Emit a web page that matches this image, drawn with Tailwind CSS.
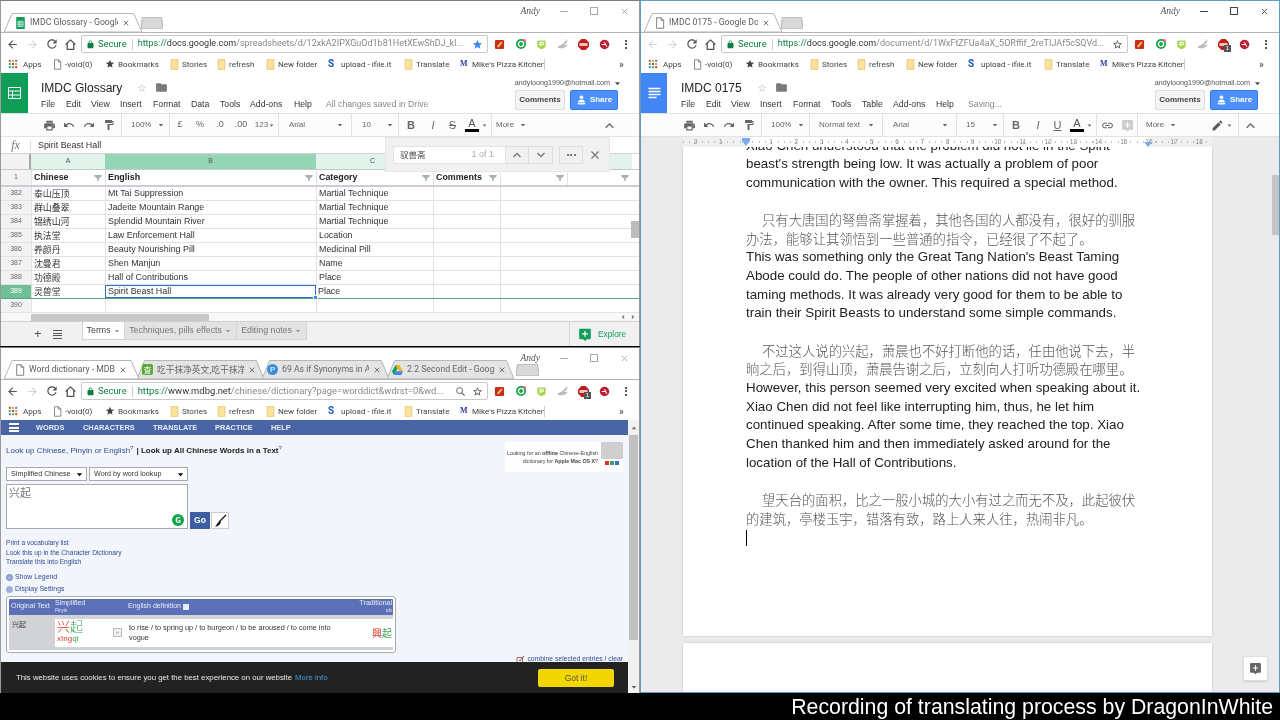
<!DOCTYPE html>
<html lang="en"><head><meta charset="utf-8"><title>Recording of translating process</title>
<script src="https://cdn.jsdelivr.net/npm/@tailwindcss/browser@4"></script></head>
<body class="m-0 bg-black overflow-hidden">
<svg class="hidden" width="0" height="0"><defs>
<symbol id="back" viewBox="0 0 24 24"><path fill="currentColor" d="M20 11H7.83l5.59-5.59L12 4l-8 8 8 8 1.41-1.41L7.83 13H20v-2z"/></symbol>
<symbol id="fwd" viewBox="0 0 24 24"><path fill="currentColor" d="M12 4l-1.41 1.41L16.17 11H4v2h12.17l-5.58 5.59L12 20l8-8z"/></symbol>
<symbol id="reload" viewBox="0 0 24 24"><path fill="currentColor" d="M17.65 6.35C16.2 4.9 14.21 4 12 4c-4.42 0-7.99 3.58-7.99 8s3.57 8 7.99 8c3.73 0 6.84-2.55 7.73-6h-2.08c-.82 2.33-3.04 4-5.65 4-3.31 0-6-2.69-6-6s2.69-6 6-6c1.66 0 3.14.69 4.22 1.78L13 11h7V4l-2.35 2.35z"/></symbol>
<symbol id="home" viewBox="0 0 24 24"><path fill="none" stroke="currentColor" stroke-width="2.4" stroke-linejoin="round" d="M3 12 L12 3.5 L21 12 M6 10 V21 H18 V10"/></symbol>
<symbol id="lock" viewBox="0 0 24 24"><path fill="currentColor" d="M18 8h-1V6c0-2.76-2.24-5-5-5S7 3.24 7 6v2H6c-1.1 0-2 .9-2 2v10c0 1.1.9 2 2 2h12c1.1 0 2-.9 2-2V10c0-1.1-.9-2-2-2zM9 6c0-1.66 1.34-3 3-3s3 1.34 3 3v2H9V6z"/></symbol>
<symbol id="star" viewBox="0 0 24 24"><path fill="currentColor" d="M12 17.27L18.18 21l-1.64-7.03L22 9.24l-7.19-.61L12 2 9.19 8.63 2 9.24l5.46 4.73L5.82 21z"/></symbol>
<symbol id="staro" viewBox="0 0 24 24"><path fill="currentColor" d="M22 9.24l-7.19-.62L12 2 9.19 8.63 2 9.24l5.46 4.73L5.82 21 12 17.27 18.18 21l-1.63-7.03L22 9.24zM12 15.4l-3.76 2.27 1-4.28-3.32-2.88 4.38-.38L12 6.1l1.71 4.04 4.38.38-3.32 2.88 1 4.28L12 15.4z"/></symbol>
<symbol id="folder" viewBox="0 0 24 24"><path fill="currentColor" d="M10 4H4c-1.1 0-2 .9-2 2v12c0 1.1.9 2 2 2h16c1.1 0 2-.9 2-2V8c0-1.1-.9-2-2-2h-8l-2-2z"/></symbol>
<symbol id="bmfolder" viewBox="0 0 12 14"><path fill="#fbe39c" stroke="#e3c265" stroke-width="1" d="M1.5.5h9v13h-9z"/></symbol>
<symbol id="page" viewBox="0 0 12 14"><path fill="#fff" stroke="#666" stroke-width="1" d="M2 .7h5.4L10.4 3.7V13.3H2z M7.4 .7V3.7H10.4"/></symbol>
<symbol id="apps" viewBox="0 0 12 12"><g><rect x="1" y="1" width="2.4" height="2.4" fill="#d9453a"/><rect x="4.8" y="1" width="2.4" height="2.4" fill="#e9a23b"/><rect x="8.6" y="1" width="2.4" height="2.4" fill="#4285f4"/><rect x="1" y="4.8" width="2.4" height="2.4" fill="#4caf50"/><rect x="4.8" y="4.8" width="2.4" height="2.4" fill="#d9453a"/><rect x="8.6" y="4.8" width="2.4" height="2.4" fill="#e9a23b"/><rect x="1" y="8.6" width="2.4" height="2.4" fill="#4285f4"/><rect x="4.8" y="8.6" width="2.4" height="2.4" fill="#4caf50"/><rect x="8.6" y="8.6" width="2.4" height="2.4" fill="#d9453a"/></g></symbol>
<symbol id="print" viewBox="0 0 24 24"><path fill="currentColor" d="M19 8H5c-1.66 0-3 1.34-3 3v6h4v4h12v-4h4v-6c0-1.66-1.34-3-3-3zm-3 11H8v-5h8v5zm3-7c-.55 0-1-.45-1-1s.45-1 1-1 1 .45 1 1-.45 1-1 1zm-1-9H6v4h12V3z"/></symbol>
<symbol id="undo" viewBox="0 0 24 24"><path fill="currentColor" d="M12.5 8c-2.65 0-5.05.99-6.9 2.6L2 7v9h9l-3.62-3.62c1.39-1.16 3.16-1.88 5.12-1.88 3.54 0 6.55 2.31 7.6 5.5l2.37-.78C21.08 11.03 17.15 8 12.5 8z"/></symbol>
<symbol id="redo" viewBox="0 0 24 24"><path fill="currentColor" d="M18.4 10.6C16.55 8.99 14.15 8 11.5 8c-4.65 0-8.58 3.03-9.96 7.22L3.9 16c1.05-3.19 4.05-5.5 7.6-5.5 1.95 0 3.73.72 5.12 1.88L13 16h9V7l-3.6 3.6z"/></symbol>
<symbol id="paint" viewBox="0 0 24 24"><path fill="currentColor" d="M18 4V3c0-.55-.45-1-1-1H5c-.55 0-1 .45-1 1v4c0 .55.45 1 1 1h12c.55 0 1-.45 1-1V6h1v4H9v11c0 .55.45 1 1 1h2c.55 0 1-.45 1-1v-9h8V4h-3z"/></symbol>
<symbol id="link" viewBox="0 0 24 24"><path fill="currentColor" d="M3.9 12c0-1.71 1.39-3.1 3.1-3.1h4V7H7c-2.76 0-5 2.24-5 5s2.24 5 5 5h4v-1.9H7c-1.71 0-3.1-1.39-3.1-3.1zM8 13h8v-2H8v2zm9-6h-4v1.9h4c1.71 0 3.1 1.39 3.1 3.1s-1.39 3.1-3.1 3.1h-4V17h4c2.76 0 5-2.24 5-5s-2.24-5-5-5z"/></symbol>
<symbol id="pencil" viewBox="0 0 24 24"><path fill="currentColor" d="M3 17.25V21h3.75L17.81 9.94l-3.75-3.75L3 17.25zM20.71 7.04c.39-.39.39-1.02 0-1.41l-2.34-2.34c-.39-.39-1.02-.39-1.41 0l-1.83 1.83 3.75 3.75 1.83-1.83z"/></symbol>
<symbol id="up" viewBox="0 0 24 24"><path fill="none" stroke="currentColor" stroke-width="2.6" d="M5 16l7-7 7 7"/></symbol>
<symbol id="down" viewBox="0 0 24 24"><path fill="none" stroke="currentColor" stroke-width="2.6" d="M5 8l7 7 7-7"/></symbol>
<symbol id="close" viewBox="0 0 24 24"><path fill="none" stroke="currentColor" stroke-width="2.4" d="M5 5l14 14M19 5L5 19"/></symbol>
<symbol id="person" viewBox="0 0 24 24"><g fill="currentColor"><circle cx="12" cy="6" r="4"/><path d="M5 16c0-3 3-5 7-5s7 2 7 5v1H5z"/><path d="M3 18h18l-2 4H5z" opacity=".9"/></g></symbol>
<symbol id="filter" viewBox="0 0 10 8"><path fill="#a9b3ae" d="M0 0h10v1.6L6 5v3H4V5L0 1.6z"/></symbol>
<symbol id="cmt" viewBox="0 0 24 24"><path fill="currentColor" d="M4 2h16c1.1 0 2 .9 2 2v14c0 1.1-.9 2-2 2h-5l-3 3-3-3H4c-1.1 0-2-.9-2-2V4c0-1.1.9-2 2-2z"/><path fill="#fff" d="M11 6h2v4h4v2h-4v4h-2v-4H7v-2h4z"/></symbol>
<symbol id="ext1" viewBox="0 0 12 12"><rect x="1" y="1" width="10" height="10" rx="1.5" fill="#c62e24"/><path d="M4 8.5L8.5 3.5" stroke="#f7c948" stroke-width="2"/></symbol>
<symbol id="ext2" viewBox="0 0 12 12"><circle cx="6" cy="6" r="5" fill="#15a34a"/><circle cx="6" cy="6" r="2.6" fill="none" stroke="#fff" stroke-width="1.3"/><circle cx="9.4" cy="2.6" r="1.7" fill="#e36a6a"/></symbol>
<symbol id="ext3" viewBox="0 0 12 12"><path d="M1.5 1.5h9v6c0 1.7-2.5 3-4.5 3.5-2-.5-4.5-1.8-4.5-3.5z" fill="#a5d64c"/><path d="M4.5 8V3.5h2.2a1.4 1.4 0 0 1 0 2.8H4.5" fill="none" stroke="#fff" stroke-width="1.2"/></symbol>
<symbol id="ext4" viewBox="0 0 12 12"><path d="M1 8C4 8 8 4 10 1c1 3-1 5-3 6 2 0 3 0 4-.5C9 10 5 11 1 10z" fill="#bdbdbd"/></symbol>
<symbol id="ext5" viewBox="0 0 12 12"><path d="M3.7 0h4.6L12 3.7v4.6L8.3 12H3.7L0 8.3V3.7z" fill="#c41b1b"/><rect x="1.6" y="4.4" width="8.8" height="3.2" fill="#fff" opacity=".75"/></symbol>
<symbol id="ext6" viewBox="0 0 12 12"><circle cx="6" cy="6" r="5.2" fill="#bb1f32"/><path d="M3 6h4M6 3.5L8.5 8.5" stroke="#fff" stroke-width="1.1" fill="none"/></symbol>
<symbol id="tab" viewBox="0 0 100 20" preserveAspectRatio="none"><path d="M0 20 L6 .5 H94 L100 20 Z" fill="currentColor" stroke="#b4b4b4" stroke-width="1" vector-effect="non-scaling-stroke"/></symbol>
<symbol id="sheet" viewBox="0 0 12 14"><rect x="1" y="0" width="10" height="14" rx="1" fill="#0f9d58"/><path d="M3 5h6v6H3zM3 7h6M3 9h6M5.5 5v6" fill="none" stroke="#fff" stroke-width=".8"/></symbol>
<symbol id="caret" viewBox="0 0 8 8"><path d="M1 2.5h6L4 6z" fill="currentColor"/></symbol>
<pattern id="callig" width="190" height="125" patternUnits="userSpaceOnUse"><g fill="none" stroke="#e4e7f4" stroke-width="5" stroke-linecap="round"><path d="M30 14c20 6 30 0 36-8M48 8c-6 22-14 38-26 50M40 36c16 2 24 10 24 24-1 14-12 22-26 26M100 20c14 18 14 40 2 64M130 16c-4 26-14 50-32 72M120 40c14 10 26 24 32 44"/><path d="M22 100c14-6 28-6 42 0M150 104c8-8 20-12 30-10" stroke-width="4"/></g></pattern>
</defs></svg>
<div class="w-[1280px] h-[720px] flex flex-col bg-black font-['Liberation_Sans',sans-serif] text-[#333] blur-[0.3px]">
<div class="flex h-[693px]">

<!-- LEFT COLUMN -->
<div class="w-[640px] h-[693px] flex flex-col gap-px">

<!-- SHEETS WINDOW -->
<div class="h-[346px] bg-white flex flex-col border-t border-[#7d7d7d] border-x border-x-[#9a9a9a] overflow-hidden">
  <div class="h-[31px] shrink-0 relative flex items-end pl-[3px]">
    <div class="relative w-[138px] h-[19px] flex items-center pl-[11px] gap-[4px] text-white z-10">
      <svg class="absolute inset-0 w-full h-full"><use href="#tab"/></svg>
      <svg class="relative w-[11px] h-[12px]"><use href="#sheet"/></svg>
      <span class="relative w-[88px] overflow-hidden whitespace-nowrap text-[8.7px] text-[#5c5c5c] font-['Roboto',sans-serif]">IMDC Glossary - Google</span>
      <svg class="relative w-[8px] h-[8px] text-[#555]"><use href="#close"/></svg>
    </div>
    <div class="relative w-[22px] h-[12px] mb-[3px] -ml-[1px] text-[#d8d8d8]"><svg class="absolute inset-0 w-full h-full"><use href="#tab"/></svg></div>
    <div class="absolute right-0 top-[3px] flex items-center text-[#a9a9a9]">
      <span class="text-[9.500px] italic text-[#555] font-['Liberation_Serif',serif] mr-[9px]">Andy</span>
      <span class="w-[30px] flex justify-center"><span class="w-[8px] h-px bg-[#a9a9a9]"></span></span>
      <span class="w-[30px] flex justify-center"><span class="w-[8px] h-[8px] border border-[#a9a9a9]"></span></span>
      <span class="w-[30px] flex justify-center"><svg class="w-[9px] h-[9px]"><use href="#close"/></svg></span>
    </div>
  </div>
  <div class="h-[23px] shrink-0 flex items-center pl-[1px] border-t border-[#b4b4b4] bg-white">
    <span class="w-[20px] flex justify-center text-[#555]"><svg class="w-[13px] h-[13px]"><use href="#back"/></svg></span>
    <span class="w-[20px] flex justify-center text-[#d5d5d5]"><svg class="w-[13px] h-[13px]"><use href="#fwd"/></svg></span>
    <span class="w-[19px] flex justify-center text-[#555]"><svg class="w-[14px] h-[14px]"><use href="#reload"/></svg></span>
    <span class="w-[19px] flex justify-center text-[#555]"><svg class="w-[13px] h-[13px]"><use href="#home"/></svg></span>
    <div class="ml-[1px] w-[407px] h-[18px] border border-[#c9c9c9] rounded-[2px] flex items-center pl-[4px] text-[9.4px] whitespace-nowrap font-['Roboto',sans-serif]">
      <svg class="w-[9px] h-[9px] text-[#0b8043]"><use href="#lock"/></svg><span class="ml-[3px] text-[#0b8043]">Secure</span><span class="w-px h-[11px] bg-[#ccc] mx-[5px]"></span><span class="w-[332px] overflow-hidden text-[9px]"><span class="text-[#0b8043]">https://</span><span class="text-[#333]">docs.google.com</span><span class="text-[#888]">/spreadsheets/d/12xkA2IPXGuOd1b81HetXEwShDJ_kl...</span></span>
      <svg class="ml-auto mr-[4px] w-[11px] h-[11px] text-[#4285f4]"><use href="#star"/></svg>
    </div>
    <span class="w-[21px] ml-[1px] flex justify-center"><svg class="w-[11px] h-[11px]"><use href="#ext1"/></svg></span>
    <span class="w-[21px] flex justify-center"><svg class="w-[12px] h-[12px]"><use href="#ext2"/></svg></span>
    <span class="w-[21px] flex justify-center"><svg class="w-[11px] h-[11px]"><use href="#ext3"/></svg></span>
    <span class="w-[21px] flex justify-center"><svg class="w-[12px] h-[12px]"><use href="#ext4"/></svg></span>
    <span class="w-[21px] flex justify-center"><svg class="w-[11px] h-[11px]"><use href="#ext5"/></svg></span>
    <span class="w-[21px] flex justify-center"><svg class="w-[11px] h-[11px]"><use href="#ext6"/></svg></span>
    <span class="w-[21px] flex flex-col items-center gap-[1.5px]"><i class="w-[2px] h-[2px] bg-[#555]"></i><i class="w-[2px] h-[2px] bg-[#555]"></i><i class="w-[2px] h-[2px] bg-[#555]"></i></span>
  </div>
  <div class="h-[18px] shrink-0 flex items-center pl-[7px] text-[8.1px] text-[#444] whitespace-nowrap font-['Roboto',sans-serif]">
    <svg class="w-[10px] h-[10px]"><use href="#apps"/></svg><span class="ml-[5px] w-[27px]">Apps</span>
    <svg class="ml-[3px] w-[9px] h-[11px]"><use href="#page"/></svg><span class="ml-[3px] w-[36px]">-void(0)</span>
    <svg class="ml-[4px] w-[10px] h-[10px] text-[#444]"><use href="#star"/></svg><span class="ml-[3px] w-[52px]">Bookmarks</span>
    <svg class="w-[9px] h-[11px]"><use href="#bmfolder"/></svg><span class="ml-[3px] w-[35px]">Stories</span>
    <svg class="w-[9px] h-[11px]"><use href="#bmfolder"/></svg><span class="ml-[3px] w-[37px]">refresh</span>
    <svg class="w-[9px] h-[11px]"><use href="#bmfolder"/></svg><span class="ml-[3px] w-[50px]">New folder</span>
    <span class="w-[10px] text-[#1a56c4] font-bold text-[10px] leading-none">S</span><span class="ml-[3px] w-[63px]">upload - ifile.it</span>
    <svg class="w-[9px] h-[11px]"><use href="#bmfolder"/></svg><span class="ml-[3px] w-[44px]">Translate</span>
    <span class="w-[11px] text-[#1f3aa0] font-bold text-[8px] font-['Liberation_Serif',serif]">M</span><span class="ml-[1px] w-[72px]">Mike's Pizza Kitchen</span>
    <span class="w-px h-[11px] bg-[#ccc]"></span>
    <span class="ml-[74px] text-[10px]">»</span>
  </div>
  <!-- app bar -->
  <div class="h-[40px] shrink-0 flex relative">
    <div class="w-[27px] bg-[#0f9d58] flex items-center justify-center"><svg class="w-[13px] h-[12px]" viewBox="0 0 13 12"><path d="M.5.5h12v11H.5zM.5 4h12M.5 8h12M4.500 4v7.500" fill="none" stroke="#fff" stroke-width="1"/></svg></div>
    <div class="pl-[13px] pt-[6px] flex-1">
      <div class="flex items-center h-[17px]"><span class="text-[12px] text-[#222]">IMDC Glossary</span><svg class="ml-[15px] w-[10px] h-[10px] text-[#d4d4d4]"><use href="#staro"/></svg><svg class="ml-[8px] w-[13px] h-[13px] text-[#7a7a7a]"><use href="#folder"/></svg></div>
      <div class="flex mt-[3px] text-[8.7px] text-[#333] whitespace-nowrap h-[12px] items-center">
        <span class="w-[25px]">File</span><span class="w-[25px]">Edit</span><span class="w-[29px]">View</span><span class="w-[33px]">Insert</span><span class="w-[38px]">Format</span><span class="w-[29px]">Data</span><span class="w-[30px]">Tools</span><span class="w-[44px]">Add-ons</span><span class="w-[32px]">Help</span><span class="text-[#888]">All changes saved in Drive</span>
      </div>
    </div>
    <div class="absolute right-[18px] top-[5px] flex items-center text-[7.2px] text-[#555] gap-[4px]">andyloong1990@hotmail.com<svg class="w-[7px] h-[7px]"><use href="#caret"/></svg></div>
    <div class="absolute left-[514px] top-[17px] flex gap-[5px]">
      <div class="w-[50px] h-[20px] bg-[#f5f5f5] border border-[#dcdcdc] rounded-[2px] flex items-center justify-center text-[8px] font-bold text-[#444]">Comments</div>
      <div class="w-[48px] h-[20px] bg-[#4d90fe] border border-[#3079ed] rounded-[2px] flex items-center justify-center gap-[3px] text-[8px] font-bold text-white"><svg class="w-[11px] h-[12px]"><use href="#person"/></svg>Share</div>
    </div>
  </div>
  <!-- toolbar -->
  <div class="h-[24px] shrink-0 flex items-center pl-[38px] border-y border-[#e3e3e3] bg-[#fcfcfc] text-[#666] text-[8px] whitespace-nowrap relative">
    <span class="w-[20px] flex justify-center"><svg class="w-[13px] h-[13px]"><use href="#print"/></svg></span>
    <span class="w-[20px] flex justify-center"><svg class="w-[12px] h-[12px]"><use href="#undo"/></svg></span>
    <span class="w-[20px] flex justify-center"><svg class="w-[12px] h-[12px]"><use href="#redo"/></svg></span>
    <span class="w-[20px] flex justify-center"><svg class="w-[12px] h-[12px]"><use href="#paint"/></svg></span>
    <span class="ml-[2px] w-px h-[23px] bg-[#e3e3e3]"></span>
    <span class="w-[47px] pl-[9px] flex items-center gap-[7px]">100%<svg class="w-[6px] h-[6px]"><use href="#caret"/></svg></span>
    <span class="w-px h-[23px] bg-[#e3e3e3]"></span>
    <span class="w-[20px] flex justify-center text-[9px]">£</span>
    <span class="w-[20px] flex justify-center text-[9px]">%</span>
    <span class="w-[20px] flex justify-center text-[9px]">.0</span>
    <span class="w-[22px] flex justify-center text-[9px]">.00</span>
    <span class="w-[25px] flex justify-center items-center gap-[1px]">123<svg class="w-[5px] h-[5px]"><use href="#caret"/></svg></span>
    <span class="ml-px w-px h-[23px] bg-[#e3e3e3]"></span>
    <span class="w-[72px] pl-[10px] flex items-center">Arial<svg class="ml-auto mr-[8px] w-[6px] h-[6px]"><use href="#caret"/></svg></span>
    <span class="w-px h-[23px] bg-[#e3e3e3]"></span>
    <span class="w-[46px] pl-[10px] flex items-center">10<svg class="ml-auto mr-[5px] w-[6px] h-[6px]"><use href="#caret"/></svg></span>
    <span class="w-px h-[23px] bg-[#e3e3e3]"></span>
    <span class="w-[24px] flex justify-center font-bold text-[11px]">B</span>
    <span class="w-[20px] flex justify-center italic text-[11px]">I</span>
    <span class="w-[19px] flex justify-center line-through text-[11px]">S</span>
    <span class="w-[20px] flex flex-col items-center text-[11px] leading-[11px] text-[#555]">A<i class="block w-[14px] h-[3px] bg-black"></i></span>
    <svg class="w-[5px] h-[5px]"><use href="#caret"/></svg>
    <span class="ml-[4px] w-px h-[23px] bg-[#e3e3e3]"></span>
    <span class="ml-[4px] flex items-center gap-[6px]">More<svg class="w-[6px] h-[6px]"><use href="#caret"/></svg></span>
    <svg class="absolute left-[602px] top-[5px] w-[13px] h-[13px]"><use href="#up"/></svg>
  </div>
  <!-- formula bar -->
  <div class="h-[17px] shrink-0 flex items-center border-b border-[#d4d4d4] text-[8.9px] relative z-10">
    <span class="w-[29px] text-center italic text-[12px] text-[#777] font-['Liberation_Serif',serif]">fx</span>
    <span class="w-px h-[11px] bg-[#ddd]"></span>
    <span class="ml-[7px] pt-[1px] text-[#333]">Spirit Beast Hall</span>
    <!-- find panel -->
    <div class="absolute left-[384px] top-0 w-[225px] h-[35px] bg-[#f1f1f1] border border-[#e6e6e6] flex items-center pl-[7px] z-20">
      <div class="w-[113px] h-[18px] bg-white border border-[#e4e4e4] flex items-center pl-[6px] pr-[11px] text-[8.5px] text-[#444] font-['Noto_Sans_CJK_SC',sans-serif]"><span>驭兽斋</span><span class="ml-auto text-[9px] text-[#aaa] font-['Liberation_Sans',sans-serif]">1 of 1</span></div>
      <div class="w-[47px] h-[18px] border border-[#dedede] border-l-0 flex text-[#777]"><span class="w-[23px] flex items-center justify-center border-r border-[#dedede]"><svg class="w-[12px] h-[12px]"><use href="#up"/></svg></span><span class="flex-1 flex items-center justify-center"><svg class="w-[12px] h-[12px]"><use href="#down"/></svg></span></div>
      <div class="ml-[6px] w-[24px] h-[18px] border border-[#dedede] flex items-center justify-center gap-[1.5px]"><i class="w-[2px] h-[2px] bg-[#777]"></i><i class="w-[2px] h-[2px] bg-[#777]"></i><i class="w-[2px] h-[2px] bg-[#777]"></i></div>
      <svg class="ml-[6px] w-[12px] h-[12px] text-[#777]"><use href="#close"/></svg>
    </div>
  </div>
  <!-- grid -->
  <div class="flex-1 flex flex-col relative">
    <div class="h-[16px] flex border-b border-[#c8c8c8] text-[7px] text-[#555]">
      <div class="w-[28px] bg-[#f3f3f3]"></div><div class="w-[2px] bg-[#a8a8a8]"></div>
      <div class="w-[74px] bg-[#e1f3ea] flex items-center justify-center">A</div>
      <div class="w-[211px] bg-[#93d5b5] flex items-center justify-center">B</div>
      <div class="w-[316px] bg-[#e1f3ea] flex items-center pl-[54px]">C</div>
    </div>
    <div class="h-[17px] flex border-b-2 border-[#c9ced4] text-[8.9px] font-bold text-[#222] items-stretch whitespace-nowrap">
      <div class="w-[30px] bg-[#f3f3f3] flex items-center justify-center text-[7px] font-normal text-[#666]">1</div>
      <div class="w-[74px] flex items-center pl-[2px] border-l border-[#e2e2e2] pr-[3px] justify-between"><span>Chinese</span><svg class="w-[8px] h-[6px]"><use href="#filter"/></svg></div>
      <div class="w-[211px] flex items-center pl-[2px] border-l border-[#e2e2e2] pr-[3px] justify-between"><span>English</span><svg class="w-[8px] h-[6px]"><use href="#filter"/></svg></div>
      <div class="w-[117px] flex items-center pl-[2px] border-l border-[#e2e2e2] pr-[3px] justify-between"><span>Category</span><svg class="w-[8px] h-[6px]"><use href="#filter"/></svg></div>
      <div class="w-[67px] flex items-center pl-[2px] border-l border-[#e2e2e2] pr-[3px] justify-between"><span>Comments</span><svg class="w-[8px] h-[6px]"><use href="#filter"/></svg></div>
      <div class="w-[67px] flex items-center justify-end border-l border-[#e2e2e2] pr-[3px]"><svg class="w-[8px] h-[6px]"><use href="#filter"/></svg></div>
      <div class="w-[65px] flex items-center justify-end border-l border-[#e2e2e2] pr-[3px]"><svg class="w-[8px] h-[6px]"><use href="#filter"/></svg></div>
    </div>
    <div class="relative flex-none text-[8.9px] text-[#333] whitespace-nowrap">
      <div class="h-[14px] flex border-b border-[#e2e2e2]"><div class="w-[30px] bg-[#f3f3f3] flex items-center justify-center text-[7px] text-[#666]">382</div><div class="w-[74px] flex items-center pl-[2px] border-l border-[#e2e2e2] font-['Noto_Sans_CJK_SC',sans-serif]">泰山压顶</div><div class="w-[211px] flex items-center pl-[2px] border-l border-[#e2e2e2]">Mt Tai Suppression</div><div class="w-[117px] flex items-center pl-[2px] border-l border-[#e2e2e2]">Martial Technique</div><div class="w-[67px] border-l border-[#e2e2e2]"></div><div class="w-[67px] border-l border-[#e2e2e2]"></div></div>
      <div class="h-[14px] flex border-b border-[#e2e2e2]"><div class="w-[30px] bg-[#f3f3f3] flex items-center justify-center text-[7px] text-[#666]">383</div><div class="w-[74px] flex items-center pl-[2px] border-l border-[#e2e2e2] font-['Noto_Sans_CJK_SC',sans-serif]">群山叠翠</div><div class="w-[211px] flex items-center pl-[2px] border-l border-[#e2e2e2]">Jadeite Mountain Range</div><div class="w-[117px] flex items-center pl-[2px] border-l border-[#e2e2e2]">Martial Technique</div><div class="w-[67px] border-l border-[#e2e2e2]"></div><div class="w-[67px] border-l border-[#e2e2e2]"></div></div>
      <div class="h-[14px] flex border-b border-[#e2e2e2]"><div class="w-[30px] bg-[#f3f3f3] flex items-center justify-center text-[7px] text-[#666]">384</div><div class="w-[74px] flex items-center pl-[2px] border-l border-[#e2e2e2] font-['Noto_Sans_CJK_SC',sans-serif]">锦绣山河</div><div class="w-[211px] flex items-center pl-[2px] border-l border-[#e2e2e2]">Splendid Mountain River</div><div class="w-[117px] flex items-center pl-[2px] border-l border-[#e2e2e2]">Martial Technique</div><div class="w-[67px] border-l border-[#e2e2e2]"></div><div class="w-[67px] border-l border-[#e2e2e2]"></div></div>
      <div class="h-[14px] flex border-b border-[#e2e2e2]"><div class="w-[30px] bg-[#f3f3f3] flex items-center justify-center text-[7px] text-[#666]">385</div><div class="w-[74px] flex items-center pl-[2px] border-l border-[#e2e2e2] font-['Noto_Sans_CJK_SC',sans-serif]">执法堂</div><div class="w-[211px] flex items-center pl-[2px] border-l border-[#e2e2e2]">Law Enforcement Hall</div><div class="w-[117px] flex items-center pl-[2px] border-l border-[#e2e2e2]">Location</div><div class="w-[67px] border-l border-[#e2e2e2]"></div><div class="w-[67px] border-l border-[#e2e2e2]"></div></div>
      <div class="h-[14px] flex border-b border-[#e2e2e2]"><div class="w-[30px] bg-[#f3f3f3] flex items-center justify-center text-[7px] text-[#666]">386</div><div class="w-[74px] flex items-center pl-[2px] border-l border-[#e2e2e2] font-['Noto_Sans_CJK_SC',sans-serif]">养颜丹</div><div class="w-[211px] flex items-center pl-[2px] border-l border-[#e2e2e2]">Beauty Nourishing Pill</div><div class="w-[117px] flex items-center pl-[2px] border-l border-[#e2e2e2]">Medicinal Pill</div><div class="w-[67px] border-l border-[#e2e2e2]"></div><div class="w-[67px] border-l border-[#e2e2e2]"></div></div>
      <div class="h-[14px] flex border-b border-[#e2e2e2]"><div class="w-[30px] bg-[#f3f3f3] flex items-center justify-center text-[7px] text-[#666]">387</div><div class="w-[74px] flex items-center pl-[2px] border-l border-[#e2e2e2] font-['Noto_Sans_CJK_SC',sans-serif]">沈曼君</div><div class="w-[211px] flex items-center pl-[2px] border-l border-[#e2e2e2]">Shen Manjun</div><div class="w-[117px] flex items-center pl-[2px] border-l border-[#e2e2e2]">Name</div><div class="w-[67px] border-l border-[#e2e2e2]"></div><div class="w-[67px] border-l border-[#e2e2e2]"></div></div>
      <div class="h-[14px] flex border-b border-[#e2e2e2]"><div class="w-[30px] bg-[#f3f3f3] flex items-center justify-center text-[7px] text-[#666]">388</div><div class="w-[74px] flex items-center pl-[2px] border-l border-[#e2e2e2] font-['Noto_Sans_CJK_SC',sans-serif]">功德殿</div><div class="w-[211px] flex items-center pl-[2px] border-l border-[#e2e2e2]">Hall of Contributions</div><div class="w-[117px] flex items-center pl-[2px] border-l border-[#e2e2e2]">Place</div><div class="w-[67px] border-l border-[#e2e2e2]"></div><div class="w-[67px] border-l border-[#e2e2e2]"></div></div>
      <div class="h-[14px] flex border-b border-[#5aa386]"><div class="w-[30px] bg-[#6fbf97] flex items-center justify-center text-[7px] text-[#fff]">389</div><div class="w-[74px] flex items-center pl-[2px] border-l border-[#e2e2e2] font-['Noto_Sans_CJK_SC',sans-serif]">灵兽堂</div><div class="relative w-[211px] flex items-center pl-[2px] border border-[#2c6fc9]">Spirit Beast Hall<span class="absolute -right-[3px] -bottom-[3px] w-[5px] h-[5px] bg-[#4285f4] border border-white"></span></div><div class="w-[117px] flex items-center pl-[2px]">Place</div><div class="w-[67px] border-l border-[#e2e2e2]"></div><div class="w-[67px] border-l border-[#e2e2e2]"></div></div>
      <div class="h-[14px] flex border-b border-[#e2e2e2]"><div class="w-[30px] bg-[#f3f3f3] flex items-center justify-center text-[7px] text-[#666]">390</div><div class="w-[74px] border-l border-[#e2e2e2]"></div><div class="w-[211px] border-l border-[#e2e2e2]"></div><div class="w-[117px] border-l border-[#e2e2e2]"></div><div class="w-[67px] border-l border-[#e2e2e2]"></div><div class="w-[67px] border-l border-[#e2e2e2]"></div></div>
      <div class="absolute right-0 top-[34px] w-[8px] h-[17px] bg-[#bcbcbc]"></div>
    </div>
    <div class="h-[8px] flex items-center pl-[30px] bg-[#f8f8f8] text-[#888]"><div class="w-[178px] h-[7px] bg-[#c8c8c8]"></div><svg class="ml-auto w-[6px] h-[6px] rotate-90"><use href="#caret"/></svg><svg class="ml-[4px] mr-[3px] w-[6px] h-[6px] -rotate-90"><use href="#caret"/></svg></div>
    <!-- sheet tabs -->
    <div class="flex-1 flex bg-[#f1f1f1] border-t border-[#cfcfcf] text-[8.8px] text-[#777] whitespace-nowrap items-start relative">
      <span class="ml-[33px] mt-[5px] text-[13px] leading-[13px] text-[#555]">+</span>
      <span class="ml-[11px] mt-[8px] w-[9px] flex flex-col gap-[1.5px]"><i class="h-px bg-[#555]"></i><i class="h-px bg-[#555]"></i><i class="h-px bg-[#555]"></i><i class="h-px bg-[#555]"></i></span>
      <div class="ml-[20px] w-[43px] h-[18px] bg-white flex items-center justify-center gap-[3px] text-[#444] border-x border-b border-[#d4d4d4]">Terms<svg class="w-[6px] h-[6px] text-[#999]"><use href="#caret"/></svg></div>
      <div class="w-[112px] h-[18px] bg-[#e3e3e3] flex items-center justify-center gap-[3px] border-r border-b border-[#d4d4d4]">Techniques, pills effects<svg class="w-[6px] h-[6px] text-[#999]"><use href="#caret"/></svg></div>
      <div class="w-[70px] h-[18px] bg-[#e3e3e3] flex items-center justify-center gap-[3px] border-r border-b border-[#d4d4d4]">Editing notes<svg class="w-[6px] h-[6px] text-[#999]"><use href="#caret"/></svg></div>
      <div class="ml-auto w-[70px] h-full border-l border-[#d8d8d8] flex items-center pl-[8px] gap-[6px] text-[8.3px] text-[#0f9d58]"><svg class="w-[14px] h-[15px]"><use href="#cmt"/></svg>Explore</div>
    </div>
  </div>
</div>

<!-- DICTIONARY WINDOW -->
<div class="h-[346px] bg-white flex flex-col border-t border-[#7d7d7d] border-x border-x-[#9a9a9a] overflow-hidden">
  <div class="h-[31px] shrink-0 relative flex items-end pl-[3px] text-[8.7px] font-['Roboto',sans-serif] whitespace-nowrap">
    <div class="relative w-[135px] h-[19px] flex items-center pl-[11px] gap-[4px] text-white z-10">
      <svg class="absolute inset-0 w-full h-full"><use href="#tab"/></svg>
      <svg class="relative w-[10px] h-[12px]"><use href="#page"/></svg>
      <span class="relative w-[86px] overflow-hidden text-[#5c5c5c]">Word dictionary - MDBG</span>
      <svg class="relative w-[8px] h-[8px] text-[#555]"><use href="#close"/></svg>
    </div>
    <div class="relative w-[127px] h-[19px] -ml-[2px] flex items-center pl-[5px] gap-[4px] text-[#e4e4e4]">
      <svg class="absolute inset-0 w-full h-full"><use href="#tab"/></svg>
      <span class="relative w-[11px] h-[11px] text-[8px] leading-[11px] text-white bg-[#5aa832] rounded-[2px] text-center font-['Noto_Sans_CJK_SC',sans-serif]">查</span>
      <span class="relative w-[87px] overflow-hidden text-[#666] font-['Noto_Sans_CJK_SC',sans-serif]">吃干抹净英文,吃干抹净翻译</span>
      <svg class="relative w-[8px] h-[8px] text-[#555]"><use href="#close"/></svg>
    </div>
    <div class="relative w-[127px] h-[19px] -ml-[2px] flex items-center pl-[5px] gap-[4px] text-[#e4e4e4]">
      <svg class="absolute inset-0 w-full h-full"><use href="#tab"/></svg>
      <span class="relative w-[11px] h-[11px] text-[8px] leading-[11px] text-white bg-[#3b8edb] rounded-full text-center">P</span>
      <span class="relative w-[87px] overflow-hidden text-[#666]">69 As if Synonyms in As if</span>
      <svg class="relative w-[8px] h-[8px] text-[#555]"><use href="#close"/></svg>
    </div>
    <div class="relative w-[127px] h-[19px] -ml-[2px] flex items-center pl-[5px] gap-[4px] text-[#e4e4e4]">
      <svg class="absolute inset-0 w-full h-full"><use href="#tab"/></svg>
      <svg class="relative w-[11px] h-[10px]" viewBox="0 0 12 11"><path d="M4 0h4l4 7H8z" fill="#f4b400"/><path d="M4 0L0 7l2 4 4-7z" fill="#0f9d58"/><path d="M2 11h8l2-4H4z" fill="#4285f4"/></svg>
      <span class="relative w-[87px] overflow-hidden text-[#666]">2.2 Second Edit - Google</span>
      <svg class="relative w-[8px] h-[8px] text-[#555]"><use href="#close"/></svg>
    </div>
    <div class="relative w-[23px] h-[12px] mb-[3px] ml-[2px] text-[#d8d8d8]"><svg class="absolute inset-0 w-full h-full"><use href="#tab"/></svg></div>
    <div class="absolute right-0 top-[3px] flex items-center text-[#a9a9a9]">
      <span class="text-[9.500px] italic text-[#555] font-['Liberation_Serif',serif] mr-[9px]">Andy</span>
      <span class="w-[30px] flex justify-center"><span class="w-[8px] h-px bg-[#a9a9a9]"></span></span>
      <span class="w-[30px] flex justify-center"><span class="w-[8px] h-[8px] border border-[#a9a9a9]"></span></span>
      <span class="w-[30px] flex justify-center"><svg class="w-[9px] h-[9px]"><use href="#close"/></svg></span>
    </div>
  </div>
  <div class="h-[23px] shrink-0 flex items-center pl-[1px] border-t border-[#b4b4b4] bg-white">
    <span class="w-[20px] flex justify-center text-[#555]"><svg class="w-[13px] h-[13px]"><use href="#back"/></svg></span>
    <span class="w-[20px] flex justify-center text-[#d5d5d5]"><svg class="w-[13px] h-[13px]"><use href="#fwd"/></svg></span>
    <span class="w-[19px] flex justify-center text-[#555]"><svg class="w-[14px] h-[14px]"><use href="#reload"/></svg></span>
    <span class="w-[19px] flex justify-center text-[#555]"><svg class="w-[13px] h-[13px]"><use href="#home"/></svg></span>
    <div class="ml-[1px] w-[407px] h-[18px] border border-[#c9c9c9] rounded-[2px] flex items-center pl-[4px] text-[9.4px] whitespace-nowrap font-['Roboto',sans-serif]">
      <svg class="w-[9px] h-[9px] text-[#0b8043]"><use href="#lock"/></svg><span class="ml-[3px] text-[#0b8043]">Secure</span><span class="w-px h-[11px] bg-[#ccc] mx-[5px]"></span><span class="w-[310px] overflow-hidden"><span class="text-[#0b8043]">https://</span><span class="text-[#333]">www.mdbg.net</span><span class="text-[#888]">/chinese/dictionary?page=worddict&amp;wdrst=0&amp;wd...</span></span>
      <svg class="ml-auto w-[11px] h-[11px] text-[#555]" viewBox="0 0 24 24"><circle cx="10" cy="10" r="6.500" fill="none" stroke="currentColor" stroke-width="2"/><path d="M15 15l6 6" stroke="currentColor" stroke-width="2.500"/></svg>
      <svg class="ml-[6px] mr-[4px] w-[11px] h-[11px] text-[#555]"><use href="#staro"/></svg>
    </div>
    <span class="w-[21px] ml-[1px] flex justify-center"><svg class="w-[11px] h-[11px]"><use href="#ext1"/></svg></span>
    <span class="w-[21px] flex justify-center"><svg class="w-[12px] h-[12px]"><use href="#ext2"/></svg></span>
    <span class="w-[21px] flex justify-center"><svg class="w-[11px] h-[11px]"><use href="#ext3"/></svg></span>
    <span class="w-[21px] flex justify-center"><svg class="w-[12px] h-[12px]"><use href="#ext4"/></svg></span>
    <span class="w-[21px] flex justify-center relative"><svg class="w-[11px] h-[11px]"><use href="#ext5"/></svg><b class="absolute left-[11px] top-[6px] w-[7px] h-[7px] bg-[#555] text-white text-[6px] leading-[7px] text-center font-normal">1</b></span>
    <span class="w-[21px] flex justify-center"><svg class="w-[11px] h-[11px]"><use href="#ext6"/></svg></span>
    <span class="w-[21px] flex flex-col items-center gap-[1.5px]"><i class="w-[2px] h-[2px] bg-[#555]"></i><i class="w-[2px] h-[2px] bg-[#555]"></i><i class="w-[2px] h-[2px] bg-[#555]"></i></span>
  </div>
  <div class="h-[18px] shrink-0 flex items-center pl-[7px] text-[8.1px] text-[#444] whitespace-nowrap font-['Roboto',sans-serif]">
    <svg class="w-[10px] h-[10px]"><use href="#apps"/></svg><span class="ml-[5px] w-[27px]">Apps</span>
    <svg class="ml-[3px] w-[9px] h-[11px]"><use href="#page"/></svg><span class="ml-[3px] w-[36px]">-void(0)</span>
    <svg class="ml-[4px] w-[10px] h-[10px] text-[#444]"><use href="#star"/></svg><span class="ml-[3px] w-[52px]">Bookmarks</span>
    <svg class="w-[9px] h-[11px]"><use href="#bmfolder"/></svg><span class="ml-[3px] w-[35px]">Stories</span>
    <svg class="w-[9px] h-[11px]"><use href="#bmfolder"/></svg><span class="ml-[3px] w-[37px]">refresh</span>
    <svg class="w-[9px] h-[11px]"><use href="#bmfolder"/></svg><span class="ml-[3px] w-[50px]">New folder</span>
    <span class="w-[10px] text-[#1a56c4] font-bold text-[10px] leading-none">S</span><span class="ml-[3px] w-[63px]">upload - ifile.it</span>
    <svg class="w-[9px] h-[11px]"><use href="#bmfolder"/></svg><span class="ml-[3px] w-[44px]">Translate</span>
    <span class="w-[11px] text-[#1f3aa0] font-bold text-[8px] font-['Liberation_Serif',serif]">M</span><span class="ml-[1px] w-[72px]">Mike's Pizza Kitchen</span>
    <span class="w-px h-[11px] bg-[#ccc]"></span>
    <span class="ml-[74px] text-[10px]">»</span>
  </div>
  <!-- site -->
  <div class="flex-1 flex relative overflow-hidden">
    <div class="w-[627px] flex flex-col relative">
      <svg class="absolute inset-0 w-full h-full"><rect width="100%" height="100%" fill="#f3f5fc"/><rect width="100%" height="100%" fill="url(#callig)"/></svg>
      <div class="relative h-[15px] bg-[#4a65a5] flex items-center text-[7.4px] font-bold text-[#e8ecf6] whitespace-nowrap">
        <span class="ml-[8px] w-[10px] flex flex-col gap-[1.5px]"><i class="h-[2px] bg-white"></i><i class="h-[2px] bg-white"></i><i class="h-[2px] bg-white"></i></span>
        <span class="ml-[17px] w-[47px]">WORDS</span><span class="w-[70px]">CHARACTERS</span><span class="w-[62px]">TRANSLATE</span><span class="w-[56px]">PRACTICE</span><span>HELP</span>
      </div>
      <div class="relative flex-1 pl-[5px] pt-[7px]">
        <div class="h-[17px] flex items-center text-[8px] whitespace-nowrap text-[#2f4d93]">Look up Chinese, Pinyin or English<sup class="text-[6px]">?</sup><span class="text-[#222] font-bold ml-[3px]">| Look up All Chinese Words in a Text</span><sup class="text-[6px]">?</sup></div>
        <div class="absolute right-[5px] top-[7px] w-[118px] h-[30px] bg-white/90 pr-[25px] pt-[7px] text-right text-[5.300px] leading-[8px] text-[#444] whitespace-nowrap">Looking for an <b>offline</b> Chinese-English<br>dictionary for <b>Apple Mac OS X</b>?<span class="absolute right-[0px] top-0 w-[22px] h-[17px] bg-[#cfcfcf] rounded-[1px]"></span><span class="absolute right-[4px] top-[19px] flex gap-[1px]"><i class="w-[4px] h-[4px] bg-[#d8362a]"></i><i class="w-[4px] h-[4px] bg-[#3aa35a]"></i><i class="w-[4px] h-[4px] bg-[#3b6fd8]"></i></span></div>
        <div class="flex gap-[2px] mt-[8px] text-[7.2px] text-[#333] whitespace-nowrap">
          <div class="w-[81px] h-[14px] bg-white border border-[#aaa] flex items-center pl-[4px] pr-[3px] justify-between">Simplified Chinese<svg class="w-[7px] h-[7px] text-black"><use href="#caret"/></svg></div>
          <div class="w-[99px] h-[14px] bg-white border border-[#aaa] flex items-center pl-[4px] pr-[3px] justify-between">Word by word lookup<svg class="w-[7px] h-[7px] text-black"><use href="#caret"/></svg></div>
        </div>
        <div class="flex items-end mt-[3px]">
          <div class="relative w-[182px] h-[45px] bg-white border border-[#aaa] pl-[2px] text-[11px] leading-[15px] text-[#777] font-['Noto_Sans_CJK_SC',sans-serif]">兴起<span class="absolute right-[3px] bottom-[2px] w-[12px] h-[12px] rounded-full bg-[#15a34a] text-white text-[8px] leading-[12px] text-center font-bold">G</span></div>
          <div class="ml-[2px] w-[20px] h-[17px] bg-[#3e5ea3] text-white text-[8.500px] font-bold flex items-center justify-center">Go</div>
          <div class="ml-[1px] w-[18px] h-[17px] bg-white border border-[#ccc] flex items-center justify-center"><svg class="w-[14px] h-[14px]" viewBox="0 0 14 14"><path d="M13 1L6 8" stroke="#111" stroke-width="1.300"/><path d="M7 7c-2 1-3 3-5 6 3-1 5-2 6-5z" fill="#111"/></svg></div>
        </div>
        <div class="mt-[9px] text-[6.600px] leading-[9.500px] text-[#2f4d93]">Print a vocabulary list<br>Look this up in the Character Dictionary<br>Translate this into English</div>
        <div class="mt-[5px] h-[12px] flex items-center gap-[2px] text-[6.900px] text-[#2f4d93]"><span class="w-[7px] h-[7px] rounded-full bg-[#9db0d6] border border-[#6c85bb]"></span>Show Legend</div>
        <div class="h-[12px] flex items-center gap-[2px] text-[6.900px] text-[#2f4d93]"><span class="w-[7px] h-[7px] rounded-full bg-[#9db0d6]"></span>Display Settings</div>
        <div class="w-[390px] h-[57px] bg-white border border-[#aaa] rounded-[3px] p-[2px] flex flex-col">
          <div class="h-[16px] bg-[#5c70b8] flex text-[7px] text-[#e8ecf6] whitespace-nowrap rounded-t-[1px]">
            <span class="w-[46px] pl-[2px] self-center">Original Text</span>
            <span class="w-[73px] self-center leading-[7px]">Simplified<br><span class="text-[4.500px]">Pinyin</span></span>
            <span class="w-[220px] self-center flex items-center gap-[2px]">English definition<i class="w-[6px] h-[6px] bg-[#e8ecf6]"></i></span>
            <span class="ml-auto pr-[1px] self-center text-right leading-[7px]">Traditional<br><span class="text-[4.500px]">rdx</span></span>
          </div>
          <div class="flex-1 bg-[#d2d3d6] flex pt-[4px] pb-[3px]">
            <span class="w-[46px] pl-[3px] text-[7px] font-['Noto_Sans_CJK_SC',sans-serif]">兴起</span>
            <div class="flex-1 bg-white flex items-center">
              <div class="w-[58px] pl-[2px] leading-[10px] font-['Noto_Sans_CJK_SC',sans-serif] text-[13px]"><span class="text-[#d8362a] font-light">兴</span><span class="text-[#3aa35a] font-light">起</span><br><span class="text-[8px] font-['Liberation_Sans',sans-serif]"><span class="text-[#d8362a]">xīng</span><span class="text-[#3aa35a]">qǐ</span></span></div>
              <span class="w-[9px] h-[9px] border border-[#bbb] bg-[#f0f0f0] text-[6px] leading-[7px] text-center text-[#89a]">»</span>
              <span class="ml-[7px] w-[218px] text-[7.300px] leading-[9.500px] text-[#333]">to rise / to spring up / to burgeon / to be aroused / to come into vogue</span>
              <span class="ml-auto font-['Noto_Sans_CJK_SC',sans-serif] text-[10px] pr-[1px]"><span class="text-[#d8362a]">興</span><span class="text-[#3aa35a]">起</span></span>
            </div>
          </div>
        </div>
        <div class="absolute right-[5px] -bottom-[2px] flex items-center gap-[2px] text-[6.800px] text-[#2f4d93] whitespace-nowrap"><svg class="w-[9px] h-[8px]" viewBox="0 0 9 8"><path d="M1 2.500h5.500V7.500H1z" fill="#fff" stroke="#778"/><path d="M2.500 4.500l1.500 1.500L8 1" fill="none" stroke="#c33" stroke-width="1"/></svg>combine selected entries / clear</div>
      </div>
      <!-- cookie bar -->
      <div class="relative h-[31px] bg-[#222] flex items-center pl-[15px] text-[7.800px] text-[#e9e9e9]">This website uses cookies to ensure you get the best experience on our website<span class="ml-[3px] text-[#3f9bdf]">More info</span>
        <span class="absolute left-[537px] top-[7px] w-[76px] h-[18px] bg-[#f1d600] rounded-[2px] flex items-center justify-center text-[8.500px] text-[#555]">Got it!</span>
      </div>
    </div>
    <!-- scrollbar -->
    <div class="flex-1 bg-[#f1f1f1] flex flex-col items-stretch">
      <div class="h-[15px] flex items-center justify-center text-[#777]"><svg class="w-[6px] h-[6px] rotate-180"><use href="#caret"/></svg></div>
      <div class="mx-[1px] h-[205px] bg-[#c1c1c1]"></div>
      <div class="mt-auto h-[12px] flex items-center justify-center text-[#555]"><svg class="w-[6px] h-[6px]"><use href="#caret"/></svg></div>
    </div>
  </div>
</div>
</div>

<!-- DOCS WINDOW -->
<div class="w-[640px] h-[693px] bg-white flex flex-col border border-[#5c9dc4] overflow-hidden">
  <div class="h-[31px] shrink-0 relative flex items-end pl-[3px]">
    <div class="relative w-[138px] h-[19px] flex items-center pl-[11px] gap-[4px] text-white z-10">
      <svg class="absolute inset-0 w-full h-full"><use href="#tab"/></svg>
      <svg class="relative w-[10px] h-[12px]"><use href="#page"/></svg>
      <span class="relative w-[89px] overflow-hidden whitespace-nowrap text-[8.7px] text-[#5c5c5c] font-['Roboto',sans-serif]">IMDC 0175 - Google Docs</span>
      <svg class="relative w-[8px] h-[8px] text-[#555]"><use href="#close"/></svg>
    </div>
    <div class="relative w-[22px] h-[12px] mb-[3px] -ml-[1px] text-[#d8d8d8]"><svg class="absolute inset-0 w-full h-full"><use href="#tab"/></svg></div>
    <div class="absolute right-0 top-[3px] flex items-center text-[#444]">
      <span class="text-[9.500px] italic text-[#555] font-['Liberation_Serif',serif] mr-[9px]">Andy</span>
      <span class="w-[30px] flex justify-center"><span class="w-[8px] h-px bg-[#444]"></span></span>
      <span class="w-[30px] flex justify-center"><span class="w-[8px] h-[8px] border border-[#444]"></span></span>
      <span class="w-[30px] flex justify-center"><svg class="w-[9px] h-[9px]"><use href="#close"/></svg></span>
    </div>
  </div>
  <div class="h-[23px] shrink-0 flex items-center pl-[1px] border-t border-[#b4b4b4] bg-white">
    <span class="w-[20px] flex justify-center text-[#d5d5d5]"><svg class="w-[13px] h-[13px]"><use href="#back"/></svg></span>
    <span class="w-[20px] flex justify-center text-[#d5d5d5]"><svg class="w-[13px] h-[13px]"><use href="#fwd"/></svg></span>
    <span class="w-[19px] flex justify-center text-[#555]"><svg class="w-[14px] h-[14px]"><use href="#reload"/></svg></span>
    <span class="w-[19px] flex justify-center text-[#555]"><svg class="w-[13px] h-[13px]"><use href="#home"/></svg></span>
    <div class="ml-[1px] w-[407px] h-[18px] border border-[#c9c9c9] rounded-[2px] flex items-center pl-[4px] text-[9.4px] whitespace-nowrap font-['Roboto',sans-serif]">
      <svg class="w-[9px] h-[9px] text-[#0b8043]"><use href="#lock"/></svg><span class="ml-[3px] text-[#0b8043]">Secure</span><span class="w-px h-[11px] bg-[#ccc] mx-[5px]"></span><span class="w-[332px] overflow-hidden text-[9px]"><span class="text-[#0b8043]">https://</span><span class="text-[#333]">docs.google.com</span><span class="text-[#888]">/document/d/1WxFtZFUa4aX_5ORffif_2reTIJAf5cSQVd...</span></span>
      <svg class="ml-auto mr-[4px] w-[11px] h-[11px] text-[#555]"><use href="#staro"/></svg>
    </div>
    <span class="w-[21px] ml-[1px] flex justify-center"><svg class="w-[11px] h-[11px]"><use href="#ext1"/></svg></span>
    <span class="w-[21px] flex justify-center"><svg class="w-[12px] h-[12px]"><use href="#ext2"/></svg></span>
    <span class="w-[21px] flex justify-center"><svg class="w-[11px] h-[11px]"><use href="#ext3"/></svg></span>
    <span class="w-[21px] flex justify-center"><svg class="w-[12px] h-[12px]"><use href="#ext4"/></svg></span>
    <span class="w-[21px] flex justify-center relative"><svg class="w-[11px] h-[11px]"><use href="#ext5"/></svg><b class="absolute left-[11px] top-[6px] w-[7px] h-[7px] bg-[#555] text-white text-[6px] leading-[7px] text-center font-normal">1</b></span>
    <span class="w-[21px] flex justify-center"><svg class="w-[11px] h-[11px]"><use href="#ext6"/></svg></span>
    <span class="w-[21px] flex flex-col items-center gap-[1.5px]"><i class="w-[2px] h-[2px] bg-[#555]"></i><i class="w-[2px] h-[2px] bg-[#555]"></i><i class="w-[2px] h-[2px] bg-[#555]"></i></span>
  </div>
  <div class="h-[18px] shrink-0 flex items-center pl-[7px] text-[8.1px] text-[#444] whitespace-nowrap font-['Roboto',sans-serif]">
    <svg class="w-[10px] h-[10px]"><use href="#apps"/></svg><span class="ml-[5px] w-[27px]">Apps</span>
    <svg class="ml-[3px] w-[9px] h-[11px]"><use href="#page"/></svg><span class="ml-[3px] w-[36px]">-void(0)</span>
    <svg class="ml-[4px] w-[10px] h-[10px] text-[#444]"><use href="#star"/></svg><span class="ml-[3px] w-[52px]">Bookmarks</span>
    <svg class="w-[9px] h-[11px]"><use href="#bmfolder"/></svg><span class="ml-[3px] w-[35px]">Stories</span>
    <svg class="w-[9px] h-[11px]"><use href="#bmfolder"/></svg><span class="ml-[3px] w-[37px]">refresh</span>
    <svg class="w-[9px] h-[11px]"><use href="#bmfolder"/></svg><span class="ml-[3px] w-[50px]">New folder</span>
    <span class="w-[10px] text-[#1a56c4] font-bold text-[10px] leading-none">S</span><span class="ml-[3px] w-[63px]">upload - ifile.it</span>
    <svg class="w-[9px] h-[11px]"><use href="#bmfolder"/></svg><span class="ml-[3px] w-[44px]">Translate</span>
    <span class="w-[11px] text-[#1f3aa0] font-bold text-[8px] font-['Liberation_Serif',serif]">M</span><span class="ml-[1px] w-[72px]">Mike's Pizza Kitchen</span>
    <span class="w-px h-[11px] bg-[#ccc]"></span>
    <span class="ml-[74px] text-[10px]">»</span>
  </div>
  <div class="h-[40px] shrink-0 flex relative">
    <div class="w-[26px] bg-[#4285f4] flex items-center justify-center"><svg class="w-[13px] h-[12px]" viewBox="0 0 13 12"><path d="M.5 1.500h12M.5 4.500h12M.5 7.500h12M.5 10.500h8" fill="none" stroke="#fff" stroke-width="1.500"/></svg></div>
    <div class="pl-[14px] pt-[6px] flex-1">
      <div class="flex items-center h-[17px]"><span class="text-[12px] text-[#222]">IMDC 0175</span><svg class="ml-[15px] w-[10px] h-[10px] text-[#d4d4d4]"><use href="#staro"/></svg><svg class="ml-[8px] w-[13px] h-[13px] text-[#7a7a7a]"><use href="#folder"/></svg></div>
      <div class="flex mt-[3px] text-[8.7px] text-[#333] whitespace-nowrap h-[12px] items-center">
        <span class="w-[25px]">File</span><span class="w-[25px]">Edit</span><span class="w-[29px]">View</span><span class="w-[33px]">Insert</span><span class="w-[38px]">Format</span><span class="w-[31px]">Tools</span><span class="w-[31px]">Table</span><span class="w-[43px]">Add-ons</span><span class="w-[32px]">Help</span><span class="text-[#888]">Saving...</span>
      </div>
    </div>
    <div class="absolute right-[18px] top-[5px] flex items-center text-[7.2px] text-[#555] gap-[4px]">andyloong1990@hotmail.com<svg class="w-[7px] h-[7px]"><use href="#caret"/></svg></div>
    <div class="absolute left-[514px] top-[17px] flex gap-[5px]">
      <div class="w-[50px] h-[20px] bg-[#f5f5f5] border border-[#dcdcdc] rounded-[2px] flex items-center justify-center text-[8px] font-bold text-[#444]">Comments</div>
      <div class="w-[48px] h-[20px] bg-[#4d90fe] border border-[#3079ed] rounded-[2px] flex items-center justify-center gap-[3px] text-[8px] font-bold text-white"><svg class="w-[11px] h-[12px]"><use href="#person"/></svg>Share</div>
    </div>
  </div>
  <div class="h-[24px] shrink-0 flex items-center pl-[38px] border-y border-[#e3e3e3] bg-[#fcfcfc] text-[#666] text-[8px] whitespace-nowrap relative">
    <span class="w-[20px] flex justify-center"><svg class="w-[13px] h-[13px]"><use href="#print"/></svg></span>
    <span class="w-[20px] flex justify-center"><svg class="w-[12px] h-[12px]"><use href="#undo"/></svg></span>
    <span class="w-[20px] flex justify-center"><svg class="w-[12px] h-[12px]"><use href="#redo"/></svg></span>
    <span class="w-[20px] flex justify-center"><svg class="w-[12px] h-[12px]"><use href="#paint"/></svg></span>
    <span class="ml-[2px] w-px h-[23px] bg-[#e3e3e3]"></span>
    <span class="w-[47px] pl-[9px] flex items-center gap-[7px]">100%<svg class="w-[6px] h-[6px]"><use href="#caret"/></svg></span>
    <span class="w-px h-[23px] bg-[#e3e3e3]"></span>
    <span class="w-[72px] pl-[9px] flex items-center">Normal text<svg class="ml-auto mr-[8px] w-[6px] h-[6px]"><use href="#caret"/></svg></span>
    <span class="w-px h-[23px] bg-[#e3e3e3]"></span>
    <span class="w-[73px] pl-[10px] flex items-center">Arial<svg class="ml-auto mr-[8px] w-[6px] h-[6px]"><use href="#caret"/></svg></span>
    <span class="w-px h-[23px] bg-[#e3e3e3]"></span>
    <span class="w-[46px] pl-[9px] flex items-center">15<svg class="ml-auto mr-[5px] w-[6px] h-[6px]"><use href="#caret"/></svg></span>
    <span class="w-px h-[23px] bg-[#e3e3e3]"></span>
    <span class="w-[24px] flex justify-center font-bold text-[11px]">B</span>
    <span class="w-[20px] flex justify-center italic text-[11px]">I</span>
    <span class="w-[19px] flex justify-center underline text-[11px]">U</span>
    <span class="w-[20px] flex flex-col items-center text-[11px] leading-[11px] text-[#555]">A<i class="block w-[14px] h-[3px] bg-black"></i></span>
    <svg class="w-[5px] h-[5px]"><use href="#caret"/></svg>
    <span class="ml-[4px] w-px h-[23px] bg-[#e3e3e3]"></span>
    <span class="w-[21px] flex justify-center"><svg class="w-[13px] h-[13px]"><use href="#link"/></svg></span>
    <span class="w-[19px] flex justify-center text-[#ccc]"><svg class="w-[13px] h-[13px]"><use href="#cmt"/></svg></span>
    <span class="w-px h-[23px] bg-[#e3e3e3]"></span>
    <span class="ml-[8px] flex items-center gap-[6px]">More<svg class="w-[6px] h-[6px]"><use href="#caret"/></svg></span>
    <svg class="ml-[35px] w-[13px] h-[13px] text-[#555]"><use href="#pencil"/></svg>
    <svg class="ml-[3px] w-[5px] h-[5px]"><use href="#caret"/></svg>
    <span class="ml-[6px] w-px h-[23px] bg-[#e3e3e3]"></span>
    <svg class="ml-[5px] w-[13px] h-[13px]"><use href="#up"/></svg>
  </div>
  <!-- ruler -->
  <div class="h-[10px] shrink-0 bg-[#ebebeb] pl-[42px] relative z-10">
    <div class="relative w-[529px] h-full bg-[#f0f0f0] flex items-center text-[6.500px] text-[#888] overflow-hidden">
      <div class="absolute left-[63px] top-0 w-[402px] h-full bg-white"></div>
      <div class="absolute left-0 right-0 top-[4px] h-[2px] bg-[repeating-linear-gradient(90deg,#bbb_0,#bbb_1px,transparent_1px,transparent_6.3px)]"></div>
      <div class="relative flex w-full whitespace-nowrap"><span class="w-[25.200px] text-center">2</span><span class="w-[25.200px] text-center">1</span><span class="w-[25.200px]"></span><span class="w-[25.200px] text-center">1</span><span class="w-[25.200px] text-center">2</span><span class="w-[25.200px] text-center">3</span><span class="w-[25.200px] text-center">4</span><span class="w-[25.200px] text-center">5</span><span class="w-[25.200px] text-center">6</span><span class="w-[25.200px] text-center">7</span><span class="w-[25.200px] text-center">8</span><span class="w-[25.200px] text-center">9</span><span class="w-[25.200px] text-center">10</span><span class="w-[25.200px] text-center">11</span><span class="w-[25.200px] text-center">12</span><span class="w-[25.200px] text-center">13</span><span class="w-[25.200px] text-center">14</span><span class="w-[25.200px] text-center">15</span><span class="w-[25.200px] text-center">16</span><span class="w-[25.200px] text-center">17</span><span class="w-[25.200px] text-center">18</span></div>
      <svg class="absolute left-[59px] top-[1px] w-[8px] h-[8px]" viewBox="0 0 8 8"><path d="M0 0h8v3H0zM0 3h8L4 8z" fill="#7ea9ee"/></svg>
      <svg class="absolute left-[461px] top-[2px] w-[8px] h-[8px]" viewBox="0 0 8 8"><path d="M0 3h8L4 8z" fill="#7ea9ee"/></svg>
    </div>
  </div>
  <!-- document area -->
  <div class="flex-1 bg-[#ebebeb] overflow-hidden relative flex">
    <div class="w-[571px] pl-[42px] shrink-0">
      <div class="w-[529px] h-[499px] -mt-[10.500px] bg-white shadow-[0_0_2px_#bbb] pl-[63px] text-[13.33px] leading-[18.67px] text-[#222] whitespace-nowrap">
        <div class="h-[18.67px]">Xiao Chen understood that the problem did not lie in the Spirit</div>
        <div class="h-[18.67px]">beast's strength being low. It was actually a problem of poor</div>
        <div class="h-[18.67px]">communication with the owner. This required a special method.</div>
        <div class="h-[18.67px]"></div>
        <div class="h-[18.67px] pl-[16px] text-[#555] font-['Noto_Sans_CJK_SC',sans-serif] font-light">只有大唐国的弩兽斋掌握着，其他各国的人都没有，很好的驯服</div>
        <div class="h-[18.67px] text-[#555] font-['Noto_Sans_CJK_SC',sans-serif] font-light">办法，能够让其领悟到一些普通的指令，已经很了不起了。</div>
        <div class="h-[18.67px]">This was something only the Great Tang Nation's Beast Taming</div>
        <div class="h-[18.67px]">Abode could do. The people of other nations did not have good</div>
        <div class="h-[18.67px]">taming methods. It was already very good for them to be able to</div>
        <div class="h-[18.67px]">train their Spirit Beasts to understand some simple commands.</div>
        <div class="h-[18.67px]"></div>
        <div class="h-[18.67px] pl-[16px] text-[#555] font-['Noto_Sans_CJK_SC',sans-serif] font-light">不过这人说的兴起，萧晨也不好打断他的话，任由他说下去，半</div>
        <div class="h-[18.67px] text-[#555] font-['Noto_Sans_CJK_SC',sans-serif] font-light">晌之后，到得山顶，萧晨告谢之后，立刻向人打听功德殿在哪里。</div>
        <div class="h-[18.67px]">However, this person seemed very excited when speaking about it.</div>
        <div class="h-[18.67px]">Xiao Chen did not feel like interrupting him, thus, he let him</div>
        <div class="h-[18.67px]">continued speaking. After some time, they reached the top. Xiao</div>
        <div class="h-[18.67px]">Chen thanked him and then immediately asked around for the</div>
        <div class="h-[18.67px]">location of the Hall of Contributions.</div>
        <div class="h-[18.67px]"></div>
        <div class="h-[18.67px] pl-[16px] text-[#555] font-['Noto_Sans_CJK_SC',sans-serif] font-light">望天台的面积，比之一般小城的大小有过之而无不及，此起彼伏</div>
        <div class="h-[18.67px] text-[#555] font-['Noto_Sans_CJK_SC',sans-serif] font-light">的建筑，亭楼玉宇，错落有致，路上人来人往，热闹非凡。</div>
        <div class="h-[18.67px] flex items-center"><span class="w-px h-[16px] bg-black"></span></div>
      </div>
      <div class="w-[529px] h-[80px] mt-[7px] bg-white shadow-[0_0_2px_#bbb]"></div>
    </div>
    <div class="absolute right-0 top-[28px] w-[7px] h-[60px] bg-[#c4c4c4]"></div>
    <div class="absolute right-[11px] bottom-[11px] w-[25px] h-[25px] bg-white border border-[#ddd] rounded-[2px] flex items-center justify-center text-[#666] shadow-[0_1px_2px_#ccc]"><svg class="w-[13px] h-[15px]"><use href="#cmt"/></svg></div>
  </div>
</div>
</div>
<!-- caption -->
<div class="h-[27px] bg-black flex items-center justify-end pr-[7px] pt-[3px] text-[21.300px] text-white whitespace-nowrap">Recording of translating process by DragonInWhite</div>
</div>
</body></html>
